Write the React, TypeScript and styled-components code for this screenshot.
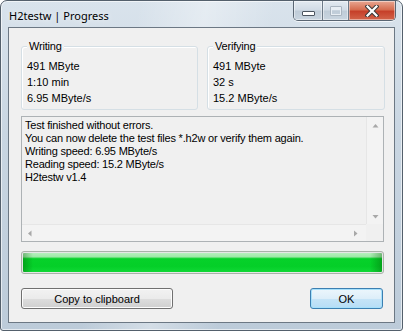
import React from 'react'
import styled, { createGlobalStyle } from 'styled-components'

const GlobalStyle = createGlobalStyle`
    html, body {
        margin: 0;
        padding: 0;
        background: #ffffff;
    }
    * {
        box-sizing: border-box;
    }
`

const App: React.FC = () => {
    return (
        <>
            <GlobalStyle />
            <StyledWindow>
                <StyledTitleBar>
                    <StyledTitle>H2testw | Progress</StyledTitle>
                    <StyledCaptionButtons>
                        <StyledCaptionButton kind="min">
                            <StyledMinGlyph />
                        </StyledCaptionButton>
                        <StyledCaptionButton kind="max">
                            <StyledMaxGlyph />
                        </StyledCaptionButton>
                        <StyledCaptionButton kind="close">
                            <svg width="14" height="12" viewBox="0 0 14 12">
                                <path d="M2.5 1.5 L11.5 10.5 M11.5 1.5 L2.5 10.5" stroke="#3a3a3a" strokeWidth="4.2" strokeLinecap="square" />
                                <path d="M2.5 1.5 L11.5 10.5 M11.5 1.5 L2.5 10.5" stroke="#ffffff" strokeWidth="2.2" strokeLinecap="square" />
                            </svg>
                        </StyledCaptionButton>
                    </StyledCaptionButtons>
                </StyledTitleBar>

                <StyledClient>
                    <StyledGroups>
                        <GroupBox title="Writing" rows={['491 MByte', '1:10 min', '6.95 MByte/s']} />
                        <GroupBox title="Verifying" rows={['491 MByte', '32 s', '15.2 MByte/s']} />
                    </StyledGroups>

                    <StyledLog>
                        <StyledLogText>
                            Test finished without errors.<br />
                            You can now delete the test files *.h2w or verify them again.<br />
                            Writing speed: 6.95 MByte/s<br />
                            Reading speed: 15.2 MByte/s<br />
                            H2testw v1.4
                        </StyledLogText>
                        <StyledVScroll>
                            <Arrow dir="up" />
                            <Arrow dir="down" />
                        </StyledVScroll>
                        <StyledHScroll>
                            <Arrow dir="left" />
                            <Arrow dir="right" />
                        </StyledHScroll>
                        <StyledScrollCorner />
                    </StyledLog>

                    <StyledProgress>
                        <StyledProgressFill />
                    </StyledProgress>

                    <StyledButtonRow>
                        <StyledButton width={152}>Copy to clipboard</StyledButton>
                        <StyledButton width={73} isDefault>OK</StyledButton>
                    </StyledButtonRow>
                </StyledClient>
            </StyledWindow>
        </>
    )
}

interface GroupBoxProps {
    title: string
    rows: string[]
}

const GroupBox: React.FC<GroupBoxProps> = ({ title, rows }) => {
    return (
        <StyledGroupBox>
            <StyledLegend>{title}</StyledLegend>
            {rows.map((r) => (
                <StyledGroupRow key={r}>{r}</StyledGroupRow>
            ))}
        </StyledGroupBox>
    )
}

interface ArrowProps {
    dir: 'up' | 'down' | 'left' | 'right'
}

const Arrow: React.FC<ArrowProps> = ({ dir }) => {
    const paths = {
        up: 'M1.5 5.5 L4.5 2 L7.5 5.5 Z',
        down: 'M1.5 3 L4.5 6.5 L7.5 3 Z',
        left: 'M5.5 1.5 L2 4.5 L5.5 7.5 Z',
        right: 'M3 1.5 L6.5 4.5 L3 7.5 Z',
    }
    return (
        <StyledArrow>
            <svg width="9" height="9" viewBox="0 0 9 9">
                <path d={paths[dir]} fill="#a8a8a8" />
            </svg>
        </StyledArrow>
    )
}

const uiFont = `"Liberation Sans", "DejaVu Sans", Arial, sans-serif`

const StyledWindow = styled.div`
    width: 403px;
    height: 331px;
    display: flex;
    flex-direction: column;
    padding: 0 7px 7px 7px;
    border: 1px solid #54606c;
    border-radius: 7px 7px 3px 3px;
    background:
        linear-gradient(100deg, rgba(255,255,255,0) 30%, rgba(255,255,255,0.35) 45%, rgba(255,255,255,0) 60%),
        linear-gradient(180deg, #d9e3ec 0%, #c9d6e2 40%, #bccbd9 100%);
    box-shadow: inset 0 0 0 1px rgba(255,255,255,0.6);
    font-family: ${uiFont};
`

const StyledTitleBar = styled.div`
    height: 28px;
    display: flex;
    align-items: flex-start;
    justify-content: space-between;
`

const StyledTitle = styled.div`
    padding: 7px 0 0 1px;
    font-family: "Noto Sans", "Open Sans", sans-serif;
    font-size: 11px;
    color: #000000;
    text-shadow: 0 0 6px rgba(255,255,255,0.9);
`

const StyledCaptionButtons = styled.div`
    display: flex;
    height: 20px;
    margin-right: -1px;
    border: 1px solid #5a6673;
    border-top: none;
    border-radius: 0 0 5px 5px;
    overflow: hidden;
    box-shadow: 0 1px 0 rgba(255,255,255,0.7);
`

const StyledCaptionButton = styled.div<{ kind: 'min' | 'max' | 'close' }>`
    width: ${(p) => (p.kind === 'close' ? 47 : p.kind === 'min' ? 28 : 26)}px;
    height: 19px;
    display: flex;
    align-items: center;
    justify-content: center;
    border-left: ${(p) => (p.kind === 'min' ? 'none' : '1px solid #6d7a88')};
    background: ${(p) =>
        p.kind === 'close'
            ? 'linear-gradient(180deg, #e8a792 0%, #d66d50 45%, #c6402a 55%, #d2644a 100%)'
            : 'linear-gradient(180deg, #e3eaf1 0%, #d2dce6 45%, #bfccd8 55%, #c9d5e0 100%)'};
    box-shadow: inset 0 0 0 1px rgba(255,255,255,0.45);
`

const StyledMinGlyph = styled.div`
    width: 13px;
    height: 5px;
    margin-top: 6px;
    background: #ffffff;
    border: 1px solid #4c5560;
    border-radius: 1px;
`

const StyledMaxGlyph = styled.div`
    width: 12px;
    height: 10px;
    border: 1px solid #aab5c0;
    box-shadow: inset 0 0 0 1px #e8eef4, inset 0 2px 0 1px #e8eef4;
    border-radius: 1px;
`

const StyledClient = styled.div`
    flex: 1;
    display: flex;
    flex-direction: column;
    padding: 11px 10px 13px 12px;
    background: #f0f0f0;
    border: 1px solid #6c7884;
    font-size: 11px;
    letter-spacing: -0.2px;
    color: #000000;
`

const StyledGroups = styled.div`
    display: grid;
    grid-template-columns: 177px 178px;
    column-gap: 9px;
    padding-top: 7px;
`

const StyledGroupBox = styled.div`
    position: relative;
    height: 64px;
    padding: 11px 0 0 5px;
    border: 1px solid #d5dfe5;
    border-radius: 3px;
    box-shadow: inset 1px 1px 0 #ffffff;
`

const StyledLegend = styled.div`
    position: absolute;
    top: -8px;
    left: 5px;
    padding: 0 2px;
    background: #f0f0f0;
    line-height: 15px;
`

const StyledGroupRow = styled.div`
    height: 16px;
    line-height: 16px;
    letter-spacing: 0;
`

const StyledLog = styled.div`
    margin-top: 6px;
    height: 126px;
    display: grid;
    grid-template-columns: 1fr 17px;
    grid-template-rows: 1fr 17px;
    border: 1px solid #adb2b5;
    background: #f0f0f0;
    overflow: hidden;
`

const StyledLogText = styled.div`
    padding: 2px 0 0 3px;
    line-height: 13px;
    white-space: nowrap;
    overflow: hidden;
`

const StyledVScroll = styled.div`
    display: flex;
    flex-direction: column;
    justify-content: space-between;
    align-items: center;
    padding: 5px 0 3px 0;
    background: #f3f3f3;
    border-left: 1px solid #e6e6e6;
`

const StyledHScroll = styled.div`
    display: flex;
    justify-content: space-between;
    align-items: center;
    padding: 0 6px 0 4px;
    background: #f3f3f3;
    border-top: 1px solid #e6e6e6;
`

const StyledScrollCorner = styled.div`
    background: #f0f0f0;
`

const StyledArrow = styled.div`
    width: 9px;
    height: 9px;
    display: flex;
`

const StyledProgress = styled.div`
    margin-top: 9px;
    height: 23px;
    padding: 1px;
    border: 1px solid #a9b2a9;
    border-radius: 3px;
    background: #e6e6e6;
`

const StyledProgressFill = styled.div`
    height: 100%;
    border-radius: 1px;
    background:
        linear-gradient(90deg, rgba(0,80,0,0.35) 0px, rgba(0,80,0,0) 10px, rgba(0,80,0,0) calc(100% - 12px), rgba(0,80,0,0.35) 100%),
        linear-gradient(180deg, #b5f0bd 0%, #9ee9a7 20%, #06d12a 30%, #04cf28 70%, #10d836 100%);
`

const StyledButtonRow = styled.div`
    margin-top: 14px;
    display: flex;
    justify-content: space-between;
    padding-right: 1px;
`

const StyledButton = styled.div<{ width: number; isDefault?: boolean }>`
    width: ${(p) => p.width}px;
    height: 21px;
    display: flex;
    align-items: center;
    justify-content: center;
    border: 1px solid ${(p) => (p.isDefault ? '#3c7fb1' : '#707070')};
    border-radius: 3px;
    font-size: 11px;
    letter-spacing: 0;
    background: ${(p) =>
        p.isDefault
            ? 'linear-gradient(180deg, #ecf6fc 0%, #ddeef9 50%, #c6e4f7 51%, #b6ddf6 100%)'
            : 'linear-gradient(180deg, #f2f2f2 0%, #ebebeb 50%, #dddddd 51%, #cfcfcf 100%)'};
    box-shadow: inset 0 0 0 1px ${(p) => (p.isDefault ? '#a6e0fb' : '#fcfcfc')};
`

export default App
